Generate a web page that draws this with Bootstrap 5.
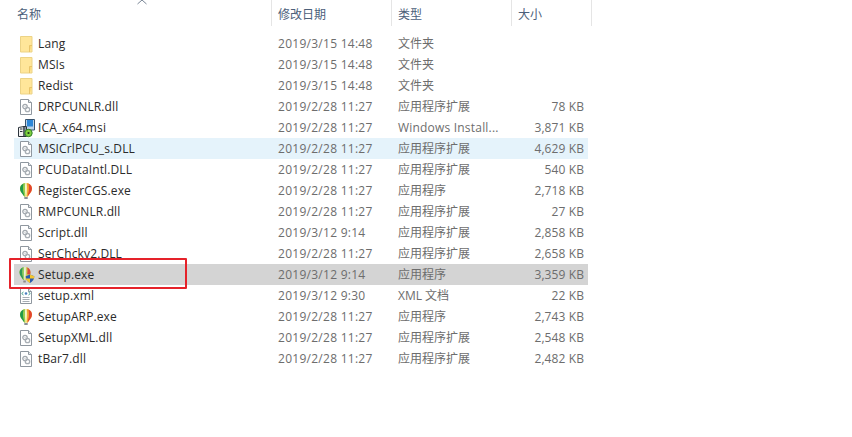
<!DOCTYPE html>
<html lang="zh"><head><meta charset="utf-8">
<link href="https://cdn.jsdelivr.net/npm/bootstrap@5.3.0/dist/css/bootstrap.min.css" rel="stylesheet">
<style>
html,body{background:#fff;height:437px;overflow:hidden}
body{font-family:"Open Sans","Noto Sans CJK SC",sans-serif;font-size:12px;color:#333;position:relative}
.hdr{height:26px;width:592px}
.hcell{color:#4c607a;height:26px;line-height:26px;border-right:1px solid #e5e5e5;padding:2px 0 0 6px;position:relative;font-size:12px}
.w1{width:272px;flex:none}.w2{width:120px;flex:none}.w3{width:120px;flex:none}.w4{width:80px;flex:none}
.hcell.w1{padding-left:17px}
.sortup{position:absolute;left:137px;top:-1px}
.rows{margin-top:7px;width:574px;margin-left:14px}
.frow{height:21px;line-height:21px;white-space:nowrap}
.frow.hl{background:#e5f3fb}
.frow.sel{background:#d4d4d4}
.c1{width:258px;flex:none;padding-left:4px;color:#2b2b2b;gap:4px;letter-spacing:.12px}
.c2{width:120px;flex:none;padding-left:6px;color:#6d6d6d;letter-spacing:.27px}
.c3{width:120px;flex:none;padding-left:6px;color:#6d6d6d}
.c4{width:76px;flex:none;text-align:right;padding-right:4px;color:#6d6d6d;letter-spacing:.1px}
.wide{letter-spacing:.2px}
.c1 svg{flex:none;overflow:visible}
.redbox{position:absolute;left:9px;top:258px;width:178px;height:31px;border:2px solid #e5222a;border-radius:1px}
</style></head><body>
<svg width="0" height="0" class="d-block position-absolute"><defs>
<symbol id="i-folder" viewBox="0 0 16 16" overflow="visible"><path d="M2.500.5h11.500v15.500H2.500z" fill="#ffe69a" stroke="#ecd386"/><path d="M11.500 16V9.500h2.500" fill="#fbd978" stroke="#e9c46a"/></symbol>
<symbol id="i-dll" viewBox="0 0 16 16"><path d="M2.500.5h8l3 3v12h-11z" fill="#fff" stroke="#8f979f"/><path d="M10.500.5v3h3" fill="#e6e9ec" stroke="#8f979f"/><circle cx="7" cy="7.500" r="2.200" fill="none" stroke="#a2a8ae" stroke-width="1.300"/><circle cx="9.500" cy="10.500" r="2.200" fill="none" stroke="#a9afb5" stroke-width="1.300"/><circle cx="7" cy="7.500" r=".8" fill="#cfd3d7"/></symbol>
<symbol id="i-corel" viewBox="0 0 16 16" overflow="visible"><path d="M8 0C4.500 0 2 2.500 2 5.800c0 3.200 2.600 5 4.200 7.700h3.600C11.400 10.800 14 9 14 5.800 14 2.500 11.500 0 8 0z" fill="#f4d64e"/><path d="M5 .8C3 1.800 2 3.600 2 5.800c0 3.200 2.600 5 4.200 7.700h.5C5.600 10 4.800 5 5.800.4z" fill="#1f9a4c"/><path d="M5.800.4C4.800 5 5.600 10 6.700 13.500h.8C7 10 6.500 5 7.300.1z" fill="#8fd14f"/><path d="M11 .8C13 1.800 14 3.600 14 5.800c0 3.200-2.600 5-4.200 7.700h-.5C10.400 10 11.200 5 10.200.4z" fill="#e2452f"/><path d="M10.200.4c1 4.600.2 9.600-.9 13.100h-.6c.6-3.500 1-8.500.2-13.300z" fill="#f39a2e"/><path d="M7.300.1C6.800 4 7.200 9 7.700 13.500h.5C8.700 9 9 4 8.500.1z" fill="#f6f7dc"/><path d="M6.300 14h3.400v2H6.300z" fill="#8a8f92"/></symbol>
<symbol id="i-setup" viewBox="0 0 16 16" overflow="visible"><path d="M7 0C3.800 0 1.500 2.300 1.500 5.500c0 3 2.200 4.700 3.700 7.500h3.500C10.300 10.200 12.500 8.500 12.500 5.500 12.500 2.300 10.200 0 7 0z" fill="#cfcf5a"/><path d="M4 .8C2.300 1.800 1.500 3.500 1.500 5.500c0 3 2.200 4.700 3.700 7.500h.5C4.700 9.500 4 5 4.900.4z" fill="#2f9a55"/><path d="M4.900.4C4 5 4.700 9.500 5.700 13h.6C6 9 5.700 4.500 6.300.1z" fill="#8fd06a"/><path d="M10 .8c1.700 1 2.500 2.700 2.500 4.700 0 .8-.1 1.400-.4 2l-3-.3c.5-2.400.6-4.800 0-6.800z" fill="#d8483c"/><path d="M6.300.1C5.800 4 6 9 6.500 13h.7C7.700 9 8 4 7.700 .1z" fill="#eef0e2"/><path d="M5.300 13.500h2.500v2H5.300z" fill="#8a8a8a"/><path d="M12 7.500 16.300 9.300c0 3.300-1.700 5.400-4.300 6.700-2.600-1.300-4.300-3.400-4.300-6.700z" fill="#2a5cae"/><path d="M12 7.500 16.300 9.300c0 .9-.1 1.400-.3 2.300H12zM12 11.600V16c-2.100-1-4-2.600-4.200-4.400z" fill="#f4c52e"/></symbol>
<symbol id="i-msi" viewBox="0 0 16 16" overflow="visible"><path d="M7.500-.5h9v10.500h-9z" fill="#bcd3e8" stroke="#38536e"/><path d="M9-.0h6v6.500H9z" fill="#2d87d8"/><path d="M.5 7.500 6 6.500v10H.5z" fill="#f2f2f2" stroke="#2c343c"/><path d="M6 6.500h2.500v10H6z" fill="#8a96a2" stroke="#2c343c"/><path d="M2 9h2.500M2 11.500h2.500" stroke="#2c343c"/><circle cx="10.500" cy="13" r="3.700" fill="#7fd03f" stroke="#2f7d2a"/><circle cx="10.500" cy="13" r="1.100" fill="#1c331a"/></symbol>
<symbol id="i-xml" viewBox="0 0 16 16"><path d="M2.500.5h8l3 3v12h-11z" fill="#fff" stroke="#8f979f"/><path d="M10.500.5v3h3" fill="#e6e9ec" stroke="#8f979f"/><path d="M5.500 4 3.700 5.500l1.800 1.500M10.500 4l1.800 1.500L10.500 7" fill="none" stroke="#3fa08c"/><circle cx="8" cy="5.500" r="1.300" fill="#4a7fc0"/><path d="M4.500 9.500h7M4.500 11.500h7M4.500 13.500h7" stroke="#a6adb4"/></symbol>
</defs></svg>

<div class="d-flex hdr">
  <div class="hcell w1">名称<svg class="sortup" width="10" height="6" viewBox="0 0 10 6"><path d="M.5 5 5 1l4.500 4" fill="none" stroke="#7a8696"/></svg></div>
  <div class="hcell w2">修改日期</div>
  <div class="hcell w3">类型</div>
  <div class="hcell w4">大小</div>
</div>

<div class="rows">
  <div class="frow d-flex"><div class="c1 d-flex align-items-center"><svg width="16" height="16"><use href="#i-folder"/></svg>Lang</div><div class="c2">2019/3/15 14:48</div><div class="c3">文件夹</div><div class="c4"></div></div>
  <div class="frow d-flex"><div class="c1 d-flex align-items-center"><svg width="16" height="16"><use href="#i-folder"/></svg>MSIs</div><div class="c2">2019/3/15 14:48</div><div class="c3">文件夹</div><div class="c4"></div></div>
  <div class="frow d-flex"><div class="c1 d-flex align-items-center"><svg width="16" height="16"><use href="#i-folder"/></svg>Redist</div><div class="c2">2019/3/15 14:48</div><div class="c3">文件夹</div><div class="c4"></div></div>
  <div class="frow d-flex"><div class="c1 d-flex align-items-center"><svg width="16" height="16"><use href="#i-dll"/></svg>DRPCUNLR.dll</div><div class="c2">2019/2/28 11:27</div><div class="c3">应用程序扩展</div><div class="c4">78 KB</div></div>
  <div class="frow d-flex"><div class="c1 d-flex align-items-center"><svg width="16" height="16"><use href="#i-msi"/></svg>ICA_x64.msi</div><div class="c2">2019/2/28 11:27</div><div class="c3 wide">Windows Install...</div><div class="c4">3,871 KB</div></div>
  <div class="frow hl d-flex"><div class="c1 d-flex align-items-center"><svg width="16" height="16"><use href="#i-dll"/></svg>MSICrlPCU_s.DLL</div><div class="c2">2019/2/28 11:27</div><div class="c3">应用程序扩展</div><div class="c4">4,629 KB</div></div>
  <div class="frow d-flex"><div class="c1 d-flex align-items-center"><svg width="16" height="16"><use href="#i-dll"/></svg>PCUDataIntl.DLL</div><div class="c2">2019/2/28 11:27</div><div class="c3">应用程序扩展</div><div class="c4">540 KB</div></div>
  <div class="frow d-flex"><div class="c1 d-flex align-items-center"><svg width="16" height="16"><use href="#i-corel"/></svg>RegisterCGS.exe</div><div class="c2">2019/2/28 11:27</div><div class="c3">应用程序</div><div class="c4">2,718 KB</div></div>
  <div class="frow d-flex"><div class="c1 d-flex align-items-center"><svg width="16" height="16"><use href="#i-dll"/></svg>RMPCUNLR.dll</div><div class="c2">2019/2/28 11:27</div><div class="c3">应用程序扩展</div><div class="c4">27 KB</div></div>
  <div class="frow d-flex"><div class="c1 d-flex align-items-center"><svg width="16" height="16"><use href="#i-dll"/></svg>Script.dll</div><div class="c2">2019/3/12 9:14</div><div class="c3">应用程序扩展</div><div class="c4">2,858 KB</div></div>
  <div class="frow d-flex"><div class="c1 d-flex align-items-center"><svg width="16" height="16"><use href="#i-dll"/></svg>SerChckv2.DLL</div><div class="c2">2019/2/28 11:27</div><div class="c3">应用程序扩展</div><div class="c4">2,658 KB</div></div>
  <div class="frow sel d-flex"><div class="c1 d-flex align-items-center"><svg width="16" height="16"><use href="#i-setup"/></svg>Setup.exe</div><div class="c2">2019/3/12 9:14</div><div class="c3">应用程序</div><div class="c4">3,359 KB</div></div>
  <div class="frow d-flex"><div class="c1 d-flex align-items-center"><svg width="16" height="16"><use href="#i-xml"/></svg>setup.xml</div><div class="c2">2019/3/12 9:30</div><div class="c3">XML 文档</div><div class="c4">22 KB</div></div>
  <div class="frow d-flex"><div class="c1 d-flex align-items-center"><svg width="16" height="16"><use href="#i-corel"/></svg>SetupARP.exe</div><div class="c2">2019/2/28 11:27</div><div class="c3">应用程序</div><div class="c4">2,743 KB</div></div>
  <div class="frow d-flex"><div class="c1 d-flex align-items-center"><svg width="16" height="16"><use href="#i-dll"/></svg>SetupXML.dll</div><div class="c2">2019/2/28 11:27</div><div class="c3">应用程序扩展</div><div class="c4">2,548 KB</div></div>
  <div class="frow d-flex"><div class="c1 d-flex align-items-center"><svg width="16" height="16"><use href="#i-dll"/></svg>tBar7.dll</div><div class="c2">2019/2/28 11:27</div><div class="c3">应用程序扩展</div><div class="c4">2,482 KB</div></div>
</div>
<div class="redbox"></div>
</body></html>
